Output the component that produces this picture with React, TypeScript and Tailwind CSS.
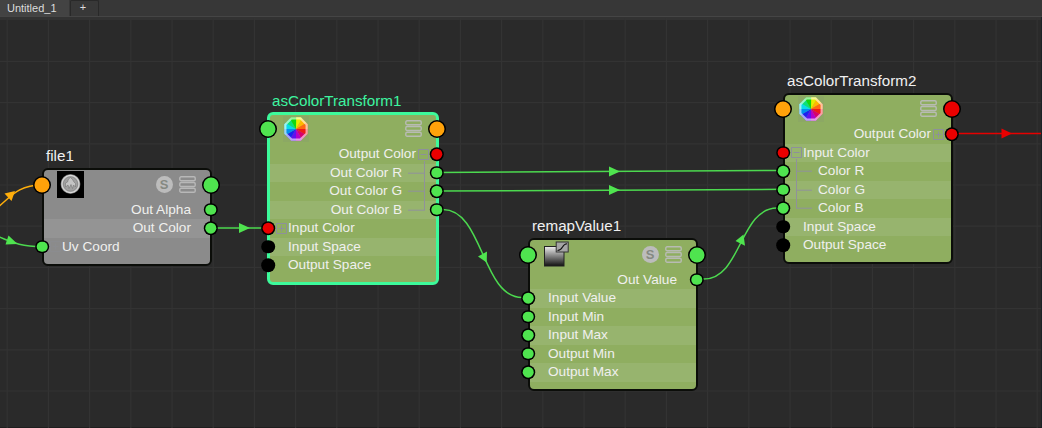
import React from "react";

type Side = "in" | "out";
type Row = { label: string; side: Side; port: string; toggle?: "plus" | "minus"; child?: boolean; last?: boolean; faint?: boolean };
type NodeProps = {
  title: string;
  frame: string;
  head: [string, string];
  icon: React.ReactNode;
  solo?: boolean;
  selected?: boolean;
  gray?: boolean;
  rows: Row[];
};

const GREEN = "bg-[#4fe44f]";
const RED = "bg-[#ea0000]";
const ORANGE = "bg-[#ffa20a]";
const BLACK = "bg-black";

function Port({ color, side, big }: { color: string; side: Side; big?: boolean }) {
  const size = big ? "size-[15px] mt-[0.6px]" : "size-[10.6px]";
  const pos = side === "in" ? "left-0 -translate-x-1/2" : "right-[0.5px] translate-x-1/2";
  return <span className={`absolute top-1/2 -translate-y-1/2 rounded-full shadow-[0_0_0_1.5px_#000] ${size} ${pos} ${color}`} />;
}

function Toggle({ kind, faint }: { kind: "plus" | "minus"; faint?: boolean }) {
  return (
    <svg width="11" height="11" viewBox="0 0 11 11" className={faint ? "opacity-30" : ""} fill="none" stroke="#8d909b">
      <path d="M.5 .5h10v10h-10zM2.500 5.500h6" />
      {kind === "plus" && <path d="M5.500 2.500v6" />}
    </svg>
  );
}

function Branch({ side, last }: { side: Side; last?: boolean }) {
  const h = last ? 9.5 : 18.5;
  return (
    <svg width="17" height="18.500" viewBox="0 0 17 18.500" className="overflow-visible" fill="none" stroke="#90919b">
      {side === "out" ? <path d={`M16.5 -3V${h}M0 9.2H16.5`} /> : <path d={`M.5 -3V${h}M.5 9.2H16`} />}
    </svg>
  );
}

function ColorWheel() {
  const cols = ["#e6ee00", "#ffb800", "#ff6a10", "#f01818", "#d8006c", "#b400c8", "#6010f0", "#1c20ef", "#0091ee", "#09dce8", "#09e27b", "#10d810"];
  const p = (a: number, r: number) => `${13 + r * Math.sin((a * Math.PI) / 180)} ${13 - r * Math.cos((a * Math.PI) / 180)}`;
  const oct = Array.from({ length: 8 }, (_, n) => p(22.5 + n * 45, 12.6).replace(" ", ",")).join(" ");
  return (
    <svg width="26" height="26" viewBox="0 0 26 26">
      <defs>
        <clipPath id="octagon"><polygon points={oct} /></clipPath>
      </defs>
      <rect width="26" height="26" fill="#8aa367" opacity=".6" />
      <g clipPath="url(#octagon)">
        {cols.map((c, n) => <path key={c} d={`M13 13L${p(n * 30, 16)}L${p(n * 30 + 31, 16)}Z`} fill={c} />)}
      </g>
      <polygon points={oct} fill="none" stroke="#fff" strokeOpacity=".6" strokeWidth="2.400" transform="translate(1.100 1.100) scale(.915)" />
    </svg>
  );
}

function FileSwatch() {
  return (
    <svg width="27" height="27" viewBox="0 0 27 27" className="mt-[1px]">
      <defs>
        <radialGradient id="disc"><stop offset="0" stopColor="#888" /><stop offset=".68" stopColor="#a0a0a0" /><stop offset=".86" stopColor="#ddd" /><stop offset="1" stopColor="#555" /></radialGradient>
      </defs>
      <rect width="27" height="27" fill="#000" />
      <circle cx="13.500" cy="13" r="10" fill="url(#disc)" />
      <circle cx="13.500" cy="13" r="7.200" fill="#a0a0a0" stroke="#858585" strokeWidth=".7" />
      <path d="M8.500 16v-4l2-1 1-3 2-1.500 2 2 1.500 2.500 1.500 1.500V16l-2-2-1 3.500-1.500-4-2 4-1-3.500z" fill="#c4c4c4" stroke="#777" strokeWidth=".6" />
    </svg>
  );
}

function RemapIcon() {
  return (
    <svg width="26" height="26" viewBox="0 0 26 26">
      <defs>
        <linearGradient id="ramp" x2="0" y2="1"><stop stopColor="#efefef" /><stop offset="1" stopColor="#111" /></linearGradient>
      </defs>
      <rect x="1.500" y="5.500" width="19.500" height="19.500" fill="url(#ramp)" stroke="#222" />
      <rect x="13.200" y="1" width="12" height="10" fill="#a5a5a5" stroke="#333" />
      <path d="M14.500 9.500c6 0 4-6.500 9.500-6.800" fill="none" stroke="#111" strokeWidth="1.100" />
    </svg>
  );
}

function Bars() {
  return (
    <svg width="17" height="17" viewBox="0 0 17 17" fill="none" stroke="#bcbcbc" strokeOpacity=".9" strokeWidth="1.400">
      <rect x=".8" y=".8" width="15.400" height="3.900" rx="1.300" />
      <rect x=".8" y="6.550" width="15.400" height="3.900" rx="1.300" />
      <rect x=".8" y="12.300" width="15.400" height="3.900" rx="1.300" />
    </svg>
  );
}

function RowView({ row, band, gray }: { row: Row; band: boolean; gray?: boolean }) {
  const out = row.side === "out";
  const bandColor = gray ? "bg-[#949494]" : "bg-[#97b46e]";
  return (
    <div className="relative h-[18.5px] px-[2px]">
      <div className={`flex h-full items-center ${out ? "justify-end" : ""} ${band ? bandColor : ""}`}>
        {out ? (
          <>
            <span className={row.toggle ? "mr-[1.5px]" : row.child ? "mr-[5.5px]" : "mr-[18.5px]"}>{row.label}</span>
            {row.toggle && <span className="mr-[7px]"><Toggle kind={row.toggle} /></span>}
            {row.child && <span className="mr-[11px]"><Branch side="out" last={row.last} /></span>}
          </>
        ) : (
          <>
            <span className="flex w-[18px] shrink-0 pl-[6px]">
              {row.toggle && <span className="shrink-0"><Toggle kind={row.toggle} faint={row.faint} /></span>}
              {row.child && <span className="ml-[5px] shrink-0"><Branch side="in" last={row.last} /></span>}
            </span>
            <span className={row.child ? "ml-[15px]" : ""}>{row.label}</span>
          </>
        )}
      </div>
      <Port color={row.port} side={row.side} />
    </div>
  );
}

function GraphNode({ title, frame, head, icon, solo, selected, gray, rows }: NodeProps) {
  return (
    <section className={`absolute ${frame}`}>
      <h2 className={`absolute -top-[22px] left-[4px] whitespace-nowrap text-[15.2px] leading-[20px] ${selected ? "text-[#3df5a0]" : "text-[#f0f0f0]"}`}>{title}</h2>
      <div className={`absolute rounded-[6px] ${selected ? "-inset-[1px] border-[3px] border-[#3dfa9b]" : "inset-0 border-2 border-[#0b0d09]"} ${gray ? "bg-[#8b8b8b]" : "bg-[#8fae60]"}`} />
      <div className="relative flex flex-col">
        <header className="relative flex h-[32.5px] items-center pl-[15px] pr-[16px]">
          <Port color={head[0]} side="in" big />
          {icon}
          <span className="ml-auto flex items-center gap-[6px]">
            {solo && <span className="flex size-[17px] items-center justify-center rounded-full bg-[#bcbcbc] text-[13px] font-bold leading-none text-[#858982]">S</span>}
            <Bars />
          </span>
          <Port color={head[1]} side="out" big />
        </header>
        {rows.map((r, n) => <RowView key={r.label} row={r} gray={gray} band={n % 2 === 1} />)}
      </div>
    </section>
  );
}

const i = (label: string, port: string, more: Partial<Row> = {}): Row => ({ label, port, side: "in", ...more });
const o = (label: string, port: string, more: Partial<Row> = {}): Row => ({ label, port, side: "out", ...more });

export default function App() {
  return (
    <div className="flex h-[428px] w-[1042px] flex-col overflow-hidden bg-[#2a2a2a] font-['Liberation_Sans',sans-serif]">
      <nav className="flex h-[16px] shrink-0 bg-[#373737] text-[11px] leading-[16px] text-[#dddddd]">
        <div className="w-[69px] bg-[#434343] pl-[7px]">Untitled_1</div>
        <div className="ml-[1px] w-[29px] rounded-t-[2px] border-x border-t border-[#292929] bg-[#383838] pr-[3px] text-center leading-[13px]">+</div>
      </nav>
      <main className="relative flex-1 border-b border-t border-b-[#1e1e1e] border-t-[#454545] text-[13.65px] leading-[18px] text-[#f0f0ee]">
        <svg className="absolute left-0 -top-[17px]" width="1042" height="428">
          <path d="M0 18.500H1042" stroke="#323232" strokeWidth="3" />
          <g stroke="#333333" strokeWidth="1.200">
            {Array.from({ length: 26 }, (_, n) => <path key={n} d={`M${7.2 + n * 41.2} 18V428`} />)}
            {Array.from({ length: 9 }, (_, n) => <path key={n} d={`M0 ${61.4 + n * 41.2}H1042`} />)}
          </g>
          <g fill="none" stroke="#4cd94f" strokeWidth="1.500">
            <path d="M211 228H268M437 172.500L783 170.500M437 191L783 189.300" />
            <path d="M437 209.500H443C483 209.500 482 297.500 522 297.500H528" />
            <path d="M697 279H704C741 279 740 208 777 208H783" />
            <path d="M-2 236.500C10 241 18 246.500 42 246.500" />
            <path d="M-2 207C10 198 17 185 42 185" stroke="#ffae0b" />
            <path d="M952 133.500H1041" stroke="#e60000" />
          </g>
          <g fill="#4fe44f">
            <path d="M239 223L250 228L239 233zM609 166.500L620 171.500L609 176.500zM609 185L620 190L609 195z" />
            <path d="M478 256.500L487 251.500L486.700 262.500zM735.500 241L743.500 234.500L745 245.700zM8.500 235.500L17.500 244L5.500 244.500z" />
            <path d="M4.500 193.500L15 191L11.500 201z" fill="#ffae0b" />
            <path d="M1001.500 128.500L1012 133.500L1001.500 138.500z" fill="#ea0000" />
          </g>
          <path d="M1041.500 17V428" stroke="#1c2327" />
        </svg>
        <div className="absolute -top-[17px] left-0">
          <GraphNode title="file1" frame="left-[42px] top-[168px] h-[97.500px] w-[169.500px]" gray solo head={[ORANGE, GREEN]} icon={<FileSwatch />}
            rows={[o("Out Alpha", GREEN), o("Out Color", GREEN), i("Uv Coord", GREEN, { toggle: "plus", faint: true })]} />
          <GraphNode title="asColorTransform1" frame="left-[268px] top-[112.500px] h-[171.500px] w-[169.500px]" selected head={[GREEN, ORANGE]} icon={<ColorWheel />}
            rows={[o("Output Color", RED, { toggle: "minus" }), o("Out Color R", GREEN, { child: true }), o("Out Color G", GREEN, { child: true }), o("Out Color B", GREEN, { child: true, last: true }), i("Input Color", RED, { toggle: "plus" }), i("Input Space", BLACK), i("Output Space", BLACK)]} />
          <GraphNode title="remapValue1" frame="left-[528px] top-[238px] h-[152.500px] w-[169.500px]" solo head={[GREEN, GREEN]} icon={<RemapIcon />}
            rows={[o("Out Value", GREEN), i("Input Value", GREEN), i("Input Min", GREEN), i("Input Max", GREEN), i("Output Min", GREEN), i("Output Max", GREEN)]} />
          <GraphNode title="asColorTransform2" frame="left-[783px] top-[92.500px] h-[171px] w-[169.500px]" head={[ORANGE, RED]} icon={<ColorWheel />}
            rows={[o("Output Color", RED, { toggle: "plus" }), i("Input Color", RED, { toggle: "minus" }), i("Color R", GREEN, { child: true }), i("Color G", GREEN, { child: true }), i("Color B", GREEN, { child: true, last: true }), i("Input Space", BLACK), i("Output Space", BLACK)]} />
        </div>
      </main>
    </div>
  );
}
